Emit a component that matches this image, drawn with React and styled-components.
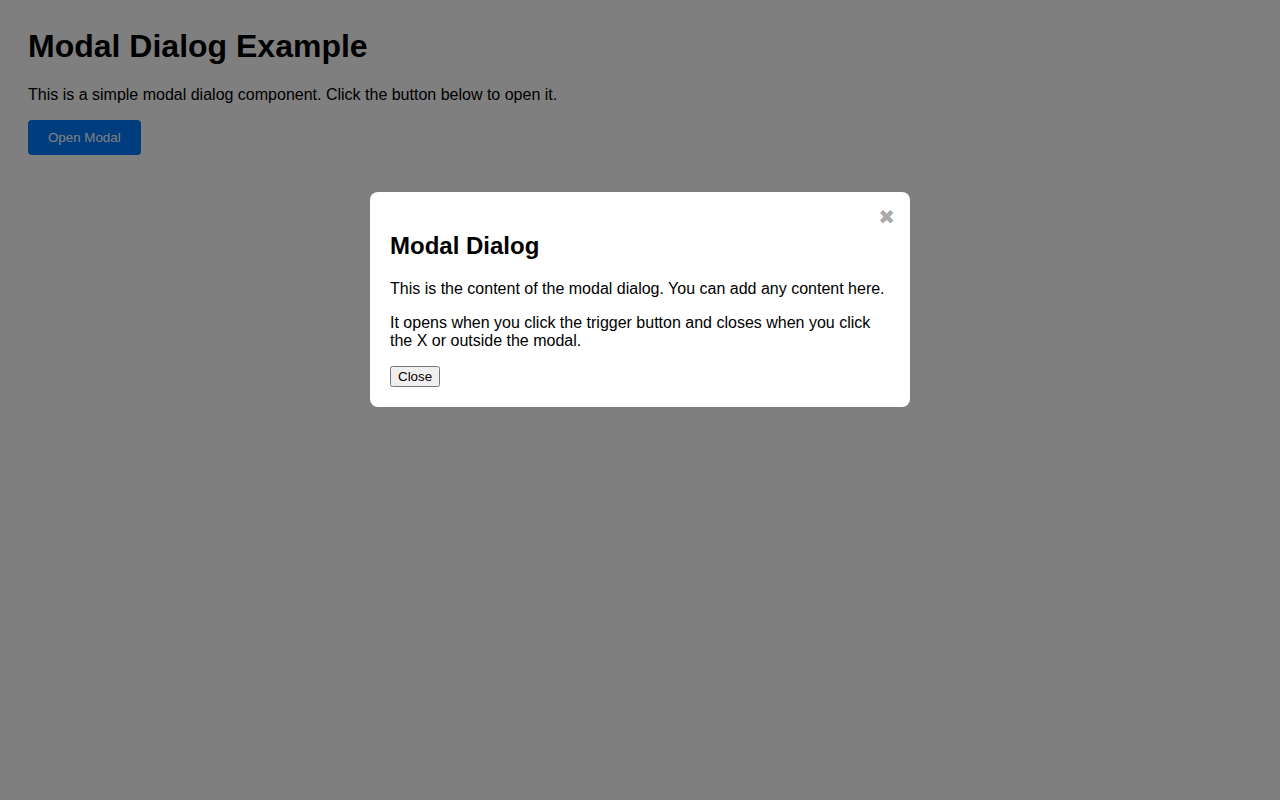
import React, { useState } from "react";
import styled, { createGlobalStyle } from "styled-components";

const GlobalStyle = createGlobalStyle`
  html, body {
    margin: 0;
    padding: 0;
    background: #ffffff;
  }
  body {
    font-family: "Liberation Sans", Arial, sans-serif;
    color: #000;
  }
`;

const Page = styled.div`
  padding: 28px;
  min-height: 800px;
  box-sizing: border-box;
`;

const Title = styled.h1`
  margin: 0 0 21px;
  font-size: 32px;
  font-weight: bold;
`;

const Intro = styled.p`
  margin: 0 0 16px;
  font-size: 16px;
`;

const TriggerButton = styled.button`
  padding: 10px 20px;
  border: none;
  border-radius: 4px;
  background: #007bff;
  color: #fff;
  font-family: "Liberation Sans", Arial, sans-serif;
  font-size: 13.333px;
  cursor: pointer;
`;

const Overlay = styled.div`
  position: fixed;
  inset: 0;
  background: rgba(0, 0, 0, 0.5);
  display: flex;
  justify-content: center;
  align-items: flex-start;
  padding-top: 192px;
  box-sizing: border-box;
`;

const Dialog = styled.div`
  position: relative;
  width: 500px;
  padding: 20px;
  background: #fff;
  border-radius: 8px;
`;

const DismissIcon = styled.span`
  position: absolute;
  top: 15px;
  right: 15px;
  font-family: "DejaVu Sans", sans-serif;
  font-size: 20px;
  line-height: 1;
  color: #aaa;
  cursor: pointer;
`;

const DialogTitle = styled.h2`
  margin: 20px 0;
  font-size: 24px;
  font-weight: bold;
`;

const DialogText = styled.p`
  margin: 16px 0;
  font-size: 16px;
`;

const CloseButton = styled.button`
  font-family: "Liberation Sans", Arial, sans-serif;
  font-size: 13.333px;
`;

export default function App() {
  const [open, setOpen] = useState(true);
  return (
    <>
      <GlobalStyle />
      <Page>
        <Title>Modal Dialog Example</Title>
        <Intro>
          This is a simple modal dialog component. Click the button below to open it.
        </Intro>
        <TriggerButton onClick={() => setOpen(true)}>Open Modal</TriggerButton>
      </Page>
      {open && (
        <Overlay onClick={() => setOpen(false)}>
          <Dialog onClick={(e) => e.stopPropagation()}>
            <DismissIcon onClick={() => setOpen(false)}>✖</DismissIcon>
            <DialogTitle>Modal Dialog</DialogTitle>
            <DialogText>
              This is the content of the modal dialog. You can add any content here.
            </DialogText>
            <DialogText>
              It opens when you click the trigger button and closes when you click the X or
              outside the modal.
            </DialogText>
            <CloseButton onClick={() => setOpen(false)}>Close</CloseButton>
          </Dialog>
        </Overlay>
      )}
    </>
  );
}
